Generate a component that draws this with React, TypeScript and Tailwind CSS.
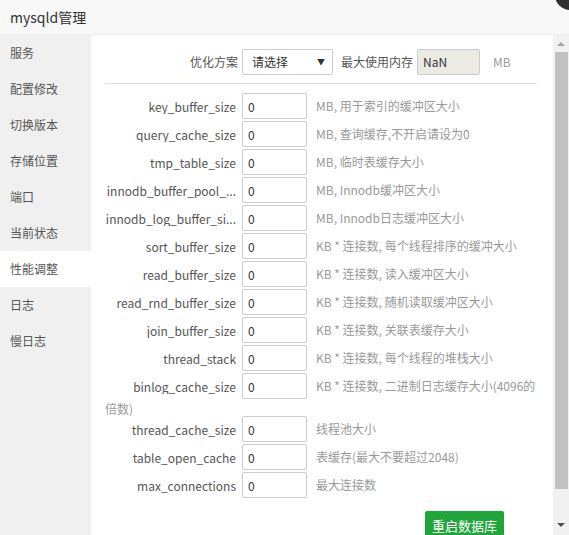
import React from "react";

const MENU = ["服务", "配置修改", "切换版本", "存储位置", "端口", "当前状态", "性能调整", "日志", "慢日志"];
const ACTIVE = "性能调整";

// labels that are too long are shown cut, as the panel does
const FIELDS: { name: string; label: string; desc: string }[] = [
  { name: "key_buffer_size", label: "key_buffer_size", desc: "MB, 用于索引的缓冲区大小" },
  { name: "query_cache_size", label: "query_cache_size", desc: "MB, 查询缓存,不开启请设为0" },
  { name: "tmp_table_size", label: "tmp_table_size", desc: "MB, 临时表缓存大小" },
  { name: "innodb_buffer_pool_size", label: "innodb_buffer_pool_...", desc: "MB, Innodb缓冲区大小" },
  { name: "innodb_log_buffer_size", label: "innodb_log_buffer_si...", desc: "MB, Innodb日志缓冲区大小" },
  { name: "sort_buffer_size", label: "sort_buffer_size", desc: "KB * 连接数, 每个线程排序的缓冲大小" },
  { name: "read_buffer_size", label: "read_buffer_size", desc: "KB * 连接数, 读入缓冲区大小" },
  { name: "read_rnd_buffer_size", label: "read_rnd_buffer_size", desc: "KB * 连接数, 随机读取缓冲区大小" },
  { name: "join_buffer_size", label: "join_buffer_size", desc: "KB * 连接数, 关联表缓存大小" },
  { name: "thread_stack", label: "thread_stack", desc: "KB * 连接数, 每个线程的堆栈大小" },
  { name: "binlog_cache_size", label: "binlog_cache_size", desc: "KB * 连接数, 二进制日志缓存大小(4096的倍数)" },
  { name: "thread_cache_size", label: "thread_cache_size", desc: "线程池大小" },
  { name: "table_open_cache", label: "table_open_cache", desc: "表缓存(最大不要超过2048)" },
  { name: "max_connections", label: "max_connections", desc: "最大连接数" },
];

function Scrollbar() {
  return (
    <div className="flex w-[16px] shrink-0 flex-col items-center bg-[#f1f1f1]">
      <div className="flex h-[17px] items-center justify-center">
        <div className="h-0 w-0 border-x-[4px] border-b-[4px] border-x-transparent border-b-[#a3a3a3]" />
      </div>
      <div className="h-[437px] w-[13px] bg-[#c1c1c1]" />
      <div className="flex-1" />
      <div className="flex h-[20px] items-center justify-center">
        <div className="h-0 w-0 border-x-[4px] border-t-[4px] border-x-transparent border-t-[#505050]" />
      </div>
    </div>
  );
}

export default function App() {
  return (
    <div className="relative h-[535px] w-[569px] overflow-hidden bg-white font-['Noto_Sans_CJK_SC',sans-serif] text-[12px] text-[#555]">
      {/* title bar */}
      <div className="h-[35px] border-b border-[#eee] bg-[#f8f8f8] pl-[10px] text-[14px] leading-[34px] text-[#333]">
        mysqld管理
      </div>
      <div className="absolute left-[555px] top-[-20px] flex h-[30px] w-[30px] items-center justify-center rounded-full bg-[#2f2f2f]">
        <div className="absolute h-[2px] w-[14px] rotate-45 bg-white" />
      </div>

      <div className="flex h-[500px]">
        {/* sidebar */}
        <div className="w-[91px] shrink-0 bg-[#f0f0f0]">
          {MENU.map((m) => (
            <div
              key={m}
              className={`h-[36px] pl-[10px] leading-[36px] ${m === ACTIVE ? "bg-white" : ""}`}
            >
              {m}
            </div>
          ))}
        </div>

        {/* content */}
        <div className="flex-1 overflow-hidden pl-[14px] pr-[16px] pt-[14px]">
          <div className="flex h-[26px] items-center">
            <span className="w-[137px] pr-[4px] text-right">优化方案</span>
            <div className="flex h-[26px] w-[91px] items-center justify-between rounded-[2px] border border-[#ccc] pl-[9px] pr-[7px] text-[#333]">
              <span>请选择</span>
              <span className="text-[8px]">▼</span>
            </div>
            <span className="ml-[8px]">最大使用内存</span>
            <div className="ml-[4px] flex h-[26px] w-[63px] items-center rounded-[2px] border border-[#ccc] bg-[#ebebe4] pl-[5px] text-[#333]">
              NaN
            </div>
            <span className="ml-[13px] text-[#999]">MB</span>
          </div>
          <div className="mt-[8px] border-t border-[#ddd]" />

          <div className="pt-[9px]">
            {FIELDS.map((f) => (
              <div key={f.name} className="mb-[2px] leading-[15px]">
                <span className="inline-block w-[131px] overflow-hidden whitespace-nowrap text-right align-middle">
                  {f.label}
                </span>
                <span className="ml-[6px] inline-flex h-[26px] w-[65px] items-center rounded-[2px] border border-[#ccc] pl-[5px] align-middle text-[#333]">
                  0
                </span>
                <span className="relative top-[2px] ml-[9px] text-[#999]">{f.desc}</span>
              </div>
            ))}
          </div>

          <button className="ml-[320px] mt-[11px] h-[30px] w-[79px] rounded-[2px] bg-[#20a53a] text-[13px] text-white">
            重启数据库
          </button>
        </div>

        <Scrollbar />
      </div>
    </div>
  );
}
